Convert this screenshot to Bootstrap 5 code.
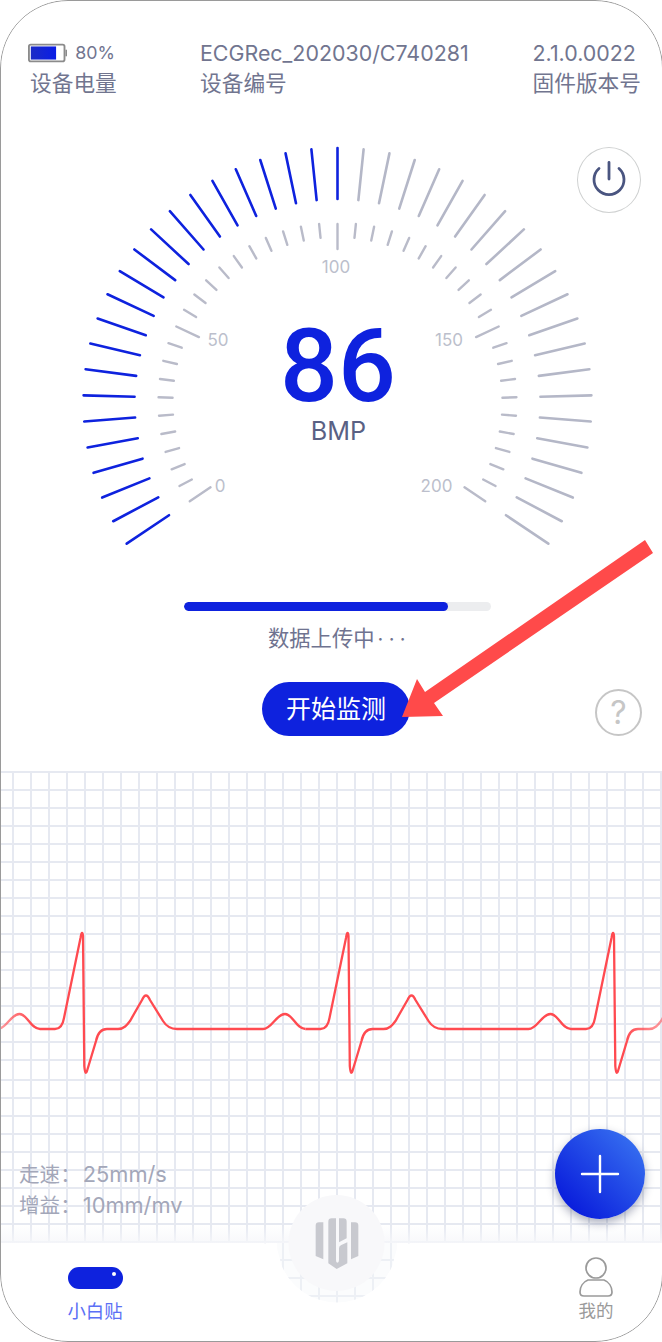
<!doctype html>
<html lang="zh"><head><meta charset="utf-8"><title>ECG</title>
<link href="https://cdn.jsdelivr.net/npm/bootstrap@5.3.0/dist/css/bootstrap.min.css" rel="stylesheet">
<style>
html,body{margin:0;background:#fff;overflow:hidden;height:1342px}
body{font-family:Inter,"Noto Sans CJK SC",sans-serif;color:#71758f}
.stage{position:relative;width:662px;height:1342px;overflow:hidden}
.phone{position:relative;width:663px;height:1342px;border-radius:68px;overflow:hidden;background:#fff}
.frame-line{position:absolute;left:0;top:0;width:663px;height:1342px;border:1px solid #9a9a9a;border-radius:68px;pointer-events:none;z-index:9}
.hdr{padding:38px 22px 0 28px;height:100px;font-size:21.4px;line-height:30px}
.hdr-cn{font-size:21.7px}
.hdr-a{width:87px;white-space:nowrap}.hdr-a .hdr-cn{padding-left:2px}
.hdr-b{margin-left:85px;white-space:nowrap}
.hdr-c{margin-left:auto;white-space:nowrap}
.hdr-pct{font-size:17.8px;margin-left:8px}
.gauge{position:relative;height:490px}
.gauge svg{display:block}
.g-num{font-family:Roboto,sans-serif;font-weight:500;font-size:102px;fill:#0e22de}
.g-unit{font-size:25.2px;fill:#5a6184}
.g-lab{font-size:17px;fill:#bcbfcc}
.pw{position:absolute;left:577px;top:47px;width:64px;height:66px;border:1.5px solid #cfd1d1;background:#fff}
.upbar{width:307px;height:9px;margin:12px auto 0 184px;background:#ecedef;border-radius:5px}
.upbar .progress-bar{background:#0e22de;border-radius:5px}
.status{font-size:21.3px;line-height:30px;height:30px;margin-top:12px;padding-left:268px;color:#6f7390;white-space:nowrap}
.status span{letter-spacing:5.4px;font-size:20px;margin-left:3px}
.ctrl{position:relative;height:54px;margin-top:29px;padding-left:262px}
.go{width:148px;height:54px;background:#0e22de;color:#fff;border:0;font-size:25px;padding:0;line-height:54px}
.go:hover{background:#0e22de;color:#fff}
.ask{position:absolute;left:595px;top:7px;width:47px;height:47px;border:2.5px solid #c6c6c6;color:#c6c6c6;font-size:32px;line-height:1}
.bed{position:relative;margin-top:35px;height:571px;
 background-image:linear-gradient(to right,#e6e9f1 2px,transparent 2px),repeating-linear-gradient(to bottom,#e6e9f1 0 2px,transparent 2px 18px),repeating-linear-gradient(to bottom,#e6e9f1 0 2px,transparent 2px 18px);
 background-size:18px 100%,100% 300px,100% 271px;background-position:12px 0,0 0,0 308px;background-repeat:repeat-x,no-repeat,no-repeat}
.wave{position:absolute;left:0;top:0;-webkit-mask-image:linear-gradient(90deg,rgba(0,0,0,.55),#000 32px,#000 625px,rgba(0,0,0,.55));mask-image:linear-gradient(90deg,rgba(0,0,0,.55),#000 32px,#000 625px,rgba(0,0,0,.55))}
.rate{position:absolute;left:19px;top:388px;font-size:20.6px;line-height:31px;color:#a3a7b9;white-space:nowrap}
.rate span{margin-left:2px;font-size:21.8px}
.fab{position:absolute;left:555px;top:358px;width:90px;height:90px;background:linear-gradient(45deg,#0a1edc 15%,#3c7af3 100%);box-shadow:0 4px 10px rgba(40,50,90,.4);border:0;padding:0;z-index:3}
.bfade{position:absolute;left:0;top:454px;width:100%;height:18px;background:linear-gradient(to bottom,rgba(246,247,250,0),rgba(246,247,250,.85))}
.tabs{position:absolute;left:0;bottom:0;width:662px;height:99px}
.tabs-bg{position:absolute;left:0;bottom:0}
.tabs-in{position:relative;height:99px}
.tab-i{width:80px;font-size:18.4px;line-height:24px;white-space:nowrap}
.tab-on{margin-left:55px;color:#5c70f5}
.tab-off{margin-left:auto;margin-right:26px;color:#9a9a9a;font-size:17.5px}
.pill-i{position:relative;width:55px;height:22px;background:#0e22de;margin:24px auto 10px}
.pill-i::after{content:"";position:absolute;left:44px;top:5px;width:4px;height:4px;border-radius:50%;background:#fff}
.usr{display:block;margin:13px auto 1px}
.mark-over{position:absolute;left:0;top:0;z-index:5;pointer-events:none}
</style></head>
<body>
<div class="stage"><div class="phone">
 <header class="hdr d-flex align-items-start">
  <div class="hdr-a">
   <div class="d-flex align-items-center">
    <svg width="42" height="22" viewBox="0 0 42 22"><defs><linearGradient id="bt" x1="0" x2="1"><stop offset="0" stop-color="#1c2bc6"/><stop offset="1" stop-color="#0a1de6"/></linearGradient></defs><rect x="1" y="2" width="38" height="18" rx="2" fill="#fff" stroke="#8b8b8b" stroke-width="2"/><rect x="3" y="4" width="27" height="14" fill="url(#bt)"/><rect x="40" y="7.5" width="2" height="7" fill="#8b8b8b"/></svg>
    <span class="hdr-pct">80%</span>
   </div>
   <div class="hdr-cn">设备电量</div>
  </div>
  <div class="hdr-b"><div>ECGRec_202030/C740281</div><div class="hdr-cn">设备编号</div></div>
  <div class="hdr-c"><div>2.1.0.0022</div><div class="hdr-cn">固件版本号</div></div>
 </header>

 <section class="gauge">
  <svg id="dial" width="662" height="490" viewBox="0 100 662 490">
   <g id="ticks" stroke-linecap="round"></g>
   <text class="g-lab" x="336" y="272.5" text-anchor="middle">100</text>
   <text class="g-lab" x="218" y="346" text-anchor="middle">50</text>
   <text class="g-lab" x="449" y="346" text-anchor="middle">150</text>
   <text class="g-lab" x="220" y="492" text-anchor="middle">0</text>
   <text class="g-lab" x="436.5" y="492" text-anchor="middle">200</text>
   <text class="g-num" x="338" y="401" text-anchor="middle">86</text>
   <text class="g-unit" x="338.5" y="440" text-anchor="middle">BMP</text>
  </svg>
  <div class="pw rounded-circle d-flex align-items-center justify-content-center">
   <svg width="40" height="40" viewBox="0 0 40 40" fill="none" stroke="#4a5580" stroke-width="2.8" stroke-linecap="round"><path d="M20 2.5V19"/><path d="M10 8.5a15 15 0 1 0 20 0"/></svg>
  </div>
 </section>

 <div class="progress upbar"><div class="progress-bar" style="width:86%"></div></div>
 <div class="status">数据上传中<span>···</span></div>
 <div class="ctrl d-flex">
  <button class="btn go rounded-pill" type="button">开始监测</button>
  <div class="ask rounded-circle d-flex align-items-center justify-content-center">?</div>
 </div>

 <section class="bed">
  <svg class="wave" width="662" height="472" viewBox="0 771 662 472" fill="none">
   <defs><path id="beat" d="M40 1029H55C60 1029 63 1024 64 1018L80.5 938Q82 929 83 936L84.3 1066Q85.3 1077 87.3 1070L96 1041Q98.5 1029 107 1029H118C124 1029 127 1025 130 1021L142 1000Q146 991 150 1000L163 1021Q168 1029 177 1029H263C272 1029 276 1014 285 1014C293 1014 296 1029 305.5 1029"/></defs>
   <g stroke="#ff4a50" stroke-width="2.3"><use href="#beat" x="-265.5"/><use href="#beat"/><use href="#beat" x="265.5"/><use href="#beat" x="531"/></g>
  </svg>
  <div class="rate"><div>走速：<span>25mm/s</span></div><div>增益：<span>10mm/mv</span></div></div>
  <button class="fab rounded-circle" type="button" aria-label="添加">
   <svg width="40" height="40" viewBox="0 0 40 40" stroke="#fff" stroke-width="2.4" stroke-linecap="round"><path d="M20 2V38M2 20H38"/></svg>
  </button>
  <div class="bfade"></div>
  <nav class="tabs">
   <svg class="tabs-bg" width="662" height="152" viewBox="0 1190 662 152">
    <path d="M277 1243A60 60 0 0 0 397 1243Z" fill="#f7f8fa" fill-opacity=".45"/>
    <path d="M0 1243H262Q272 1243 277 1250Q279 1254 281 1264A60 60 0 0 0 393 1264Q395 1254 397 1250Q402 1243 412 1243H662V1342H0Z" fill="#fff"/>
    <circle cx="336.5" cy="1243" r="48" fill="#f8f8fa"/>
    <g transform="translate(270 1180) scale(.3333)" fill="#c8c9cf">
     <path d="M137 137Q137 127 147 127H160V238L137 228Z"/>
     <path d="M243 127H255Q265 127 265 137V228L243 238Z"/>
     <path d="M175 125Q175 115 185 115H198V240Q198 248 202 248Q207 248 207 240V205Q207 198 214 195L232 187V250L200 267L175 250Z"/>
     <path d="M207 115H220Q230 115 230 125V175L207 187Z"/>
    </g>
   </svg>
   <div class="tabs-in d-flex">
    <div class="tab-i tab-on text-center"><div class="pill-i rounded-pill"></div>小白贴</div>
    <div class="tab-i tab-off text-center">
     <svg class="usr" width="36" height="42" viewBox="0 0 36 42" fill="none" stroke="#9a9a9a" stroke-width="1.7"><circle cx="18" cy="12" r="10"/><path d="M10 24H26C31 26 34 31 34 36Q34 40 30 40H6Q2 40 2 36C2 31 5 26 10 24Z"/></svg>
     我的
    </div>
   </div>
  </nav>
 </section>
 <div class="frame-line"></div>
 <svg class="mark-over" width="662" height="1342" viewBox="0 0 662 1342"><polygon points="645,540 653,553 434,703 443,716 402,717 417,679 425,692" fill="#ff4a4a"/></svg>
</div></div>
<script>
var g=document.getElementById('ticks'),cx=337.5,cy=402,step=5.9,out='';
function ln(a,r1,r2,c,w){var t=a*Math.PI/180,s=Math.sin(t),k=Math.cos(t);
 return '<line x1="'+(cx+r1*s).toFixed(2)+'" y1="'+(cy-r1*k).toFixed(2)+'" x2="'+(cx+r2*s).toFixed(2)+'" y2="'+(cy-r2*k).toFixed(2)+'" stroke="'+c+'" stroke-width="'+w+'"/>';}
for(var i=0;i<=42;i++){var a=-123.9+i*step;
 out+=ln(a,203,254,i<=21?'#0e22de':'#b4b7c7',2.6);
 var major=(i==0||i==10||i==21||i==32||i==42);
 out+=ln(a,major?153:165,major?178:179,'#b9bbc9',2.4);}
g.innerHTML=out;
</script>
<script src="https://cdn.jsdelivr.net/npm/bootstrap@5.3.0/dist/js/bootstrap.bundle.min.js"></script>
</body></html>
